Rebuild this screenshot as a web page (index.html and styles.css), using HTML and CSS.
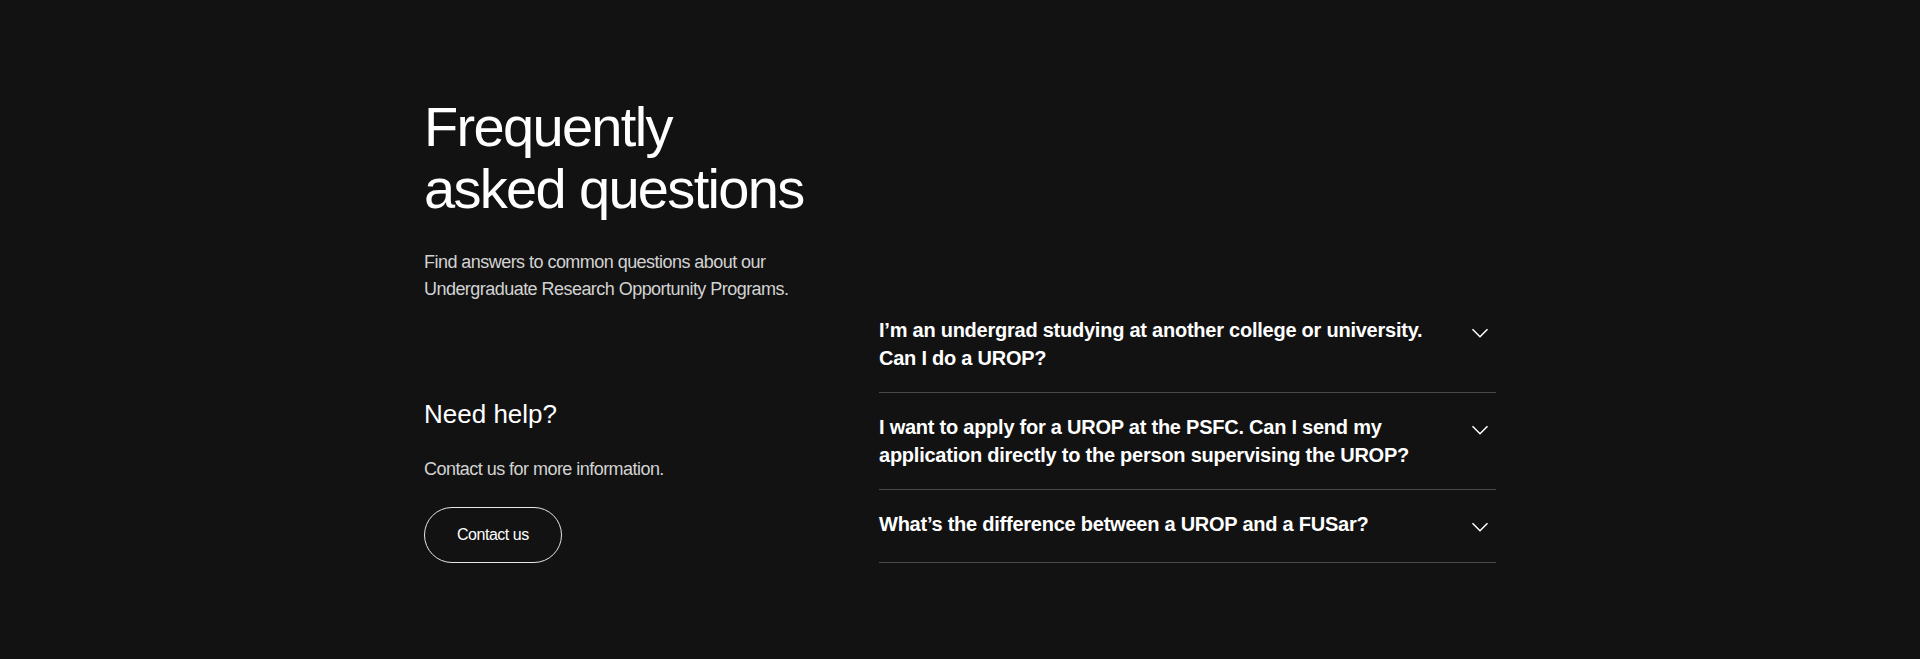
FILE: index.html
```html
<!DOCTYPE html>
<html lang="en">
<head>
<meta charset="utf-8">
<title>Frequently asked questions</title>
<link rel="stylesheet" href="styles.css">
</head>
<body>
<section class="faq-section">
  <div class="container">
    <div class="intro">
      <div class="intro-top">
        <h2 class="title">Frequently<br>asked questions</h2>
        <p class="lead">Find answers to common questions about our Undergraduate Research Opportunity Programs.</p>
      </div>
      <div class="help">
        <h3 class="help-title">Need help?</h3>
        <p class="help-text">Contact us for more information.</p>
        <a class="btn" href="#">Contact us</a>
      </div>
    </div>
    <ul class="faq-list">
      <li class="faq-item">
        <span class="question">I’m an undergrad studying at another college or university. Can I do a UROP?</span>
        <span class="icon"><svg viewBox="0 0 32 32" width="32" height="32"><path d="M8.5 13.2 L16 20.8 L23.5 13.2" fill="none" stroke="#fff" stroke-width="1.5"/></svg></span>
      </li>
      <li class="faq-item">
        <span class="question">I want to apply for a UROP at the PSFC. Can I send my application directly to the person supervising the UROP?</span>
        <span class="icon"><svg viewBox="0 0 32 32" width="32" height="32"><path d="M8.5 13.2 L16 20.8 L23.5 13.2" fill="none" stroke="#fff" stroke-width="1.5"/></svg></span>
      </li>
      <li class="faq-item">
        <span class="question">What’s the difference between a UROP and a FUSar?</span>
        <span class="icon"><svg viewBox="0 0 32 32" width="32" height="32"><path d="M8.5 13.2 L16 20.8 L23.5 13.2" fill="none" stroke="#fff" stroke-width="1.5"/></svg></span>
      </li>
    </ul>
  </div>
</section>
</body>
</html>
```

FILE: styles.css
```css
html, body {
  margin: 0;
  padding: 0;
  background: #121212;
}

body {
  font-family: "Liberation Sans", Arial, sans-serif;
  color: #ffffff;
}

.faq-section {
  padding: 96px 0;
}

.container {
  max-width: 1072px;
  margin: 0 auto;
  display: grid;
  grid-template-columns: repeat(12, 1fr);
  column-gap: 20px;
}

.intro {
  grid-column: 1 / span 5;
  display: flex;
  flex-direction: column;
  gap: 96px;
}

.title {
  margin: 0;
  font-size: 56px;
  line-height: 1.1;
  font-weight: 400;
  letter-spacing: -0.03em;
  color: #ffffff;
}

.lead {
  margin: 30px 0 0;
  font-size: 18px;
  line-height: 27px;
  letter-spacing: -0.03em;
  color: #d2d2d2;
}

.help {
  display: flex;
  flex-direction: column;
  align-items: flex-start;
}

.help-title {
  margin: 0;
  font-size: 26px;
  line-height: 1.2;
  font-weight: 400;
  letter-spacing: 0;
  color: #ffffff;
}

.help-text {
  margin: 26px 0 0;
  font-size: 18px;
  line-height: 27px;
  letter-spacing: -0.03em;
  color: #d2d2d2;
}

.btn {
  margin-top: 24px;
  box-sizing: border-box;
  height: 56px;
  padding: 0 32px;
  display: inline-flex;
  align-items: center;
  border: 1px solid #e6e6e6;
  border-radius: 28px;
  color: #ffffff;
  text-decoration: none;
  font-size: 16px;
  letter-spacing: -0.03em;
}

.faq-list {
  grid-column: 6 / span 7;
  align-self: end;
  list-style: none;
  margin: 0;
  padding: 0;
}

.faq-item {
  display: flex;
  align-items: flex-start;
  justify-content: space-between;
  gap: 24px;
  padding: 20px 0;
  border-bottom: 1px solid #4a4a4a;
}

.question {
  flex: 1;
  font-size: 20px;
  line-height: 28px;
  font-weight: 700;
  letter-spacing: -0.012em;
  color: #ffffff;
}

.icon {
  flex: 0 0 32px;
  width: 32px;
  height: 32px;
  display: block;
}

.icon svg {
  display: block;
}
```
